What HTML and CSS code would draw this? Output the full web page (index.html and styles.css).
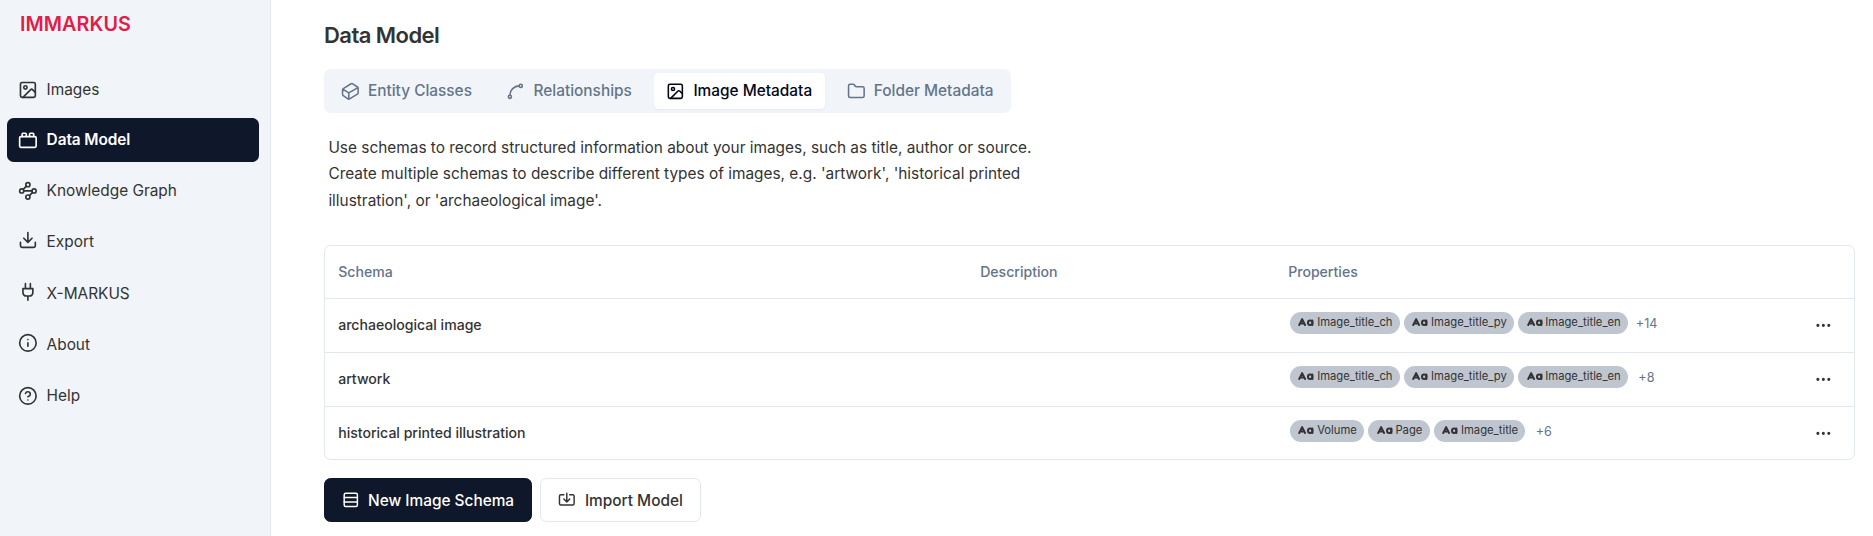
FILE: index.html
```html
<!DOCTYPE html>
<html lang="en">
<head>
<meta charset="utf-8">
<title>IMMARKUS</title>
<link rel="stylesheet" href="styles.css">
</head>
<body>
<svg class="defs" width="0" height="0">
  <symbol id="image" viewBox="0 0 24 24"><rect width="18" height="18" x="3" y="3" rx="2"/><circle cx="9" cy="9" r="2"/><path d="m21 15-3.086-3.086a2 2 0 0 0-2.828 0L6 21"/></symbol>
  <symbol id="brick" viewBox="0 0 24 24"><rect width="20" height="13" x="2" y="8" rx="1.5"/><path d="M10 8V5c0-.6-.4-1-1-1H6a1 1 0 0 0-1 1v3M19 8V5c0-.6-.4-1-1-1h-3a1 1 0 0 0-1 1v3"/></symbol>
  <symbol id="graph" viewBox="0 0 24 24"><circle cx="12" cy="4.5" r="2.5"/><path d="m10.2 6.3-3.9 3.9M7 12h10m-3.2 5.7 3.9-3.9"/><circle cx="4.5" cy="12" r="2.5"/><circle cx="19.5" cy="12" r="2.5"/><circle cx="12" cy="19.5" r="2.5"/></symbol>
  <symbol id="download" viewBox="0 0 24 24"><path d="M21 15v4a2 2 0 0 1-2 2H5a2 2 0 0 1-2-2v-4M7 10l5 5 5-5M12 15V3"/></symbol>
  <symbol id="plug" viewBox="0 0 24 24"><path d="M12 22v-5M9 8V2M15 8V2M18 8v5a4 4 0 0 1-4 4h-4a4 4 0 0 1-4-4V8Z"/></symbol>
  <symbol id="info" viewBox="0 0 24 24"><circle cx="12" cy="12" r="10"/><path d="M12 16v-4M12 8h.01"/></symbol>
  <symbol id="help" viewBox="0 0 24 24"><circle cx="12" cy="12" r="10"/><path d="M9.09 9a3 3 0 0 1 5.83 1c0 2-3 3-3 3M12 17h.01"/></symbol>
  <symbol id="cuboid" viewBox="0 0 24 24"><path d="m21.12 6.4-6.05-4.06a2 2 0 0 0-2.17-.05L2.95 8.41a2 2 0 0 0-.95 1.7v5.82a2 2 0 0 0 .88 1.66l6.05 4.07a2 2 0 0 0 2.17.05l9.95-6.12a2 2 0 0 0 .95-1.7V8.06a2 2 0 0 0-.88-1.66ZM10 22v-8L2.25 9.15M10 14l11.77-6.87"/></symbol>
  <symbol id="spline" viewBox="0 0 24 24"><circle cx="19" cy="5" r="2"/><circle cx="5" cy="19" r="2"/><path d="M5 17A12 12 0 0 1 17 5"/></symbol>
  <symbol id="folder" viewBox="0 0 24 24"><path d="M20 20a2 2 0 0 0 2-2V8a2 2 0 0 0-2-2h-7.9a2 2 0 0 1-1.69-.9L9.6 3.9A2 2 0 0 0 7.93 3H4a2 2 0 0 0-2 2v13a2 2 0 0 0 2 2Z"/></symbol>
  <symbol id="rows" viewBox="0 0 24 24"><rect width="18" height="18" x="3" y="3" rx="2"/><path d="M21 9H3M21 15H3"/></symbol>
  <symbol id="import" viewBox="0 0 24 24"><path d="M12 3v12M8 11l4 4 4-4M8 5H4a2 2 0 0 0-2 2v10a2 2 0 0 0 2 2h16a2 2 0 0 0 2-2V7a2 2 0 0 0-2-2h-4"/></symbol>
  <symbol id="case" viewBox="0 0 24 24"><path d="m3 15 4-8 4 8M4 13h6M21 9v6"/><circle cx="18" cy="12" r="3"/></symbol>
  <symbol id="dots" viewBox="0 0 24 24"><circle cx="12" cy="12" r="1"/><circle cx="19" cy="12" r="1"/><circle cx="5" cy="12" r="1"/></symbol>
</svg>
<div class="app">
  <aside class="sidebar">
    <h1 class="brand">IMMARKUS</h1>
    <nav class="nav">
      <a class="nav-item first"><svg class="icon"><use href="#image"/></svg><span>Images</span></a>
      <a class="nav-item active"><svg class="icon"><use href="#brick"/></svg><span>Data Model</span></a>
      <a class="nav-item"><svg class="icon"><use href="#graph"/></svg><span>Knowledge Graph</span></a>
      <a class="nav-item raised"><svg class="icon"><use href="#download"/></svg><span>Export</span></a>
      <a class="nav-item raised external"><svg class="icon"><use href="#plug"/></svg><span>X-MARKUS</span></a>
      <a class="nav-item raised"><svg class="icon"><use href="#info"/></svg><span>About</span></a>
      <a class="nav-item"><svg class="icon"><use href="#help"/></svg><span>Help</span></a>
    </nav>
  </aside>
  <main class="main">
    <h2 class="title">Data Model</h2>
    <div class="tabs">
      <button class="tab"><svg class="icon"><use href="#cuboid"/></svg><span>Entity Classes</span></button>
      <button class="tab"><svg class="icon"><use href="#spline"/></svg><span>Relationships</span></button>
      <button class="tab selected"><svg class="icon"><use href="#image"/></svg><span>Image Metadata</span></button>
      <button class="tab"><svg class="icon"><use href="#folder"/></svg><span>Folder Metadata</span></button>
    </div>
    <p class="intro">Use schemas to record structured information about your images, such as title, author or source. Create multiple schemas to describe different types of images, e.g. 'artwork', 'historical printed illustration', or 'archaeological image'.</p>
    <div class="table">
      <div class="row head"><span>Schema</span><span>Description</span><span>Properties</span><span></span></div>
      <div class="row"><span class="name">archaeological image</span><span></span>
        <div class="props"><span class="badge"><svg><use href="#case"/></svg>Image_title_ch</span><span class="badge"><svg><use href="#case"/></svg>Image_title_py</span><span class="badge"><svg><use href="#case"/></svg>Image_title_en</span><span class="more two">+14</span></div>
        <svg class="dots"><use href="#dots"/></svg></div>
      <div class="row"><span class="name">artwork</span><span></span>
        <div class="props"><span class="badge"><svg><use href="#case"/></svg>Image_title_ch</span><span class="badge"><svg><use href="#case"/></svg>Image_title_py</span><span class="badge"><svg><use href="#case"/></svg>Image_title_en</span><span class="more">+8</span></div>
        <svg class="dots"><use href="#dots"/></svg></div>
      <div class="row"><span class="name">historical printed illustration</span><span></span>
        <div class="props"><span class="badge"><svg><use href="#case"/></svg>Volume</span><span class="badge"><svg><use href="#case"/></svg>Page</span><span class="badge"><svg><use href="#case"/></svg>Image_title</span><span class="more">+6</span></div>
        <svg class="dots"><use href="#dots"/></svg></div>
    </div>
    <div class="actions">
      <button class="btn primary"><svg class="icon"><use href="#rows"/></svg><span>New Image Schema</span></button>
      <button class="btn"><svg class="icon"><use href="#import"/></svg><span>Import Model</span></button>
    </div>
  </main>
</div>
</body>
</html>
```
FILE: styles.css
```css
* { box-sizing: border-box; }
body { margin: 0; font-family: Inter, sans-serif; font-size: 15.4px; color: #333; background: #fff; }
h1, h2, p { margin: 0; }
button { font: inherit; color: inherit; border: 0; background: none; margin: 0; }
svg { fill: none; stroke: currentColor; stroke-width: 2; stroke-linecap: round; stroke-linejoin: round; flex: none; }
.defs { position: absolute; }
.app { display: flex; height: 536px; overflow: hidden; }
.sidebar { width: 271px; flex: none; background: #f1f5f9; border-right: 1px solid #e2e8f0; padding: 10px 11px 0 7px; }
.brand { font-size: 19.8px; line-height: 28px; font-weight: 600; letter-spacing: .05px; color: #e11d48; padding-left: 13px; }
.nav { display: flex; flex-direction: column; gap: 7px; padding-top: 29.6px; }
.nav-item { display: flex; align-items: center; height: 44px; gap: 8.8px; padding-left: 11px; border-radius: 6.6px; }
.first { margin-bottom: -1px; }
.external { margin-top: 1px; }
.nav .icon { width: 19.8px; height: 19.8px; }
.raised .icon { margin-top: -4px; }
.active { background: #0f172a; color: #fff; font-weight: 600; letter-spacing: -.08px; }
.main { flex: 1; padding: 22px 18px 0 53px; }
.title { font-size: 22px; line-height: 26px; font-weight: 600; letter-spacing: -.55px; }
.tabs { display: flex; gap: 8.8px; width: 687px; height: 44px; margin-top: 21px; padding: 4.4px; background: #f1f5f9; border-radius: 6.6px; color: #64748b; }
.tab { display: flex; align-items: center; gap: 8.5px; padding: 0 13.2px 0 12.4px; border-radius: 4.4px; font-weight: 500; white-space: nowrap; height: 35.2px; }
.tab .icon { width: 18.7px; height: 18.7px; }
.btn .icon { width: 17.6px; height: 17.6px; }
.selected { background: #fff; color: #020617; box-shadow: 0 1px 2px rgb(0 0 0 / .05); }
.intro { width: 725px; padding: 22px 4.4px 0; line-height: 26.4px; }
.table { margin-top: 30.8px; border: 1px solid #e2e8f0; border-radius: 6.6px; height: 215px; font-size: 14.08px; font-weight: 500; }
.row { display: grid; grid-template-columns: 642px 308px 1fr 44px; align-items: center; height: 54px; padding: 0 8.6px 0 13.2px; border-bottom: 1px solid #e2e8f0; }
.row:last-child { border-bottom: 0; height: 53px; }
.row.head { height: 53px; padding-bottom: 1.6px; color: #64748b; }
.name { padding-bottom: 2.4px; }
.props { display: flex; align-items: center; gap: 4.4px; padding-left: 2px; margin-top: -4.6px; font-weight: 400; }
.badge { display: flex; align-items: center; gap: 2.2px; height: 22px; padding: 0 7.2px 1.8px 7.2px; border-radius: 11px; background: #c0c6d0; font-size: 11.25px; white-space: nowrap; }
.badge svg { width: 17.6px; height: 17.6px; stroke-width: 2.7; }
.more { color: #64748b; font-size: 12.6px; padding-left: 6px; }
.more.two { padding-left: 3.5px; }
.dots { width: 18.7px; height: 18.7px; margin-left: 13px; }
.actions { display: flex; gap: 8px; margin-top: 18px; }
.btn { display: flex; align-items: center; gap: 8.8px; height: 44px; padding: 0 17.6px; border: 1px solid #e2e8f0; border-radius: 6.6px; font-weight: 500; white-space: nowrap; }
.primary { background: #0f172a; border-color: #0f172a; color: #fff; padding: 0 16.8px 0 16.6px; }
```
